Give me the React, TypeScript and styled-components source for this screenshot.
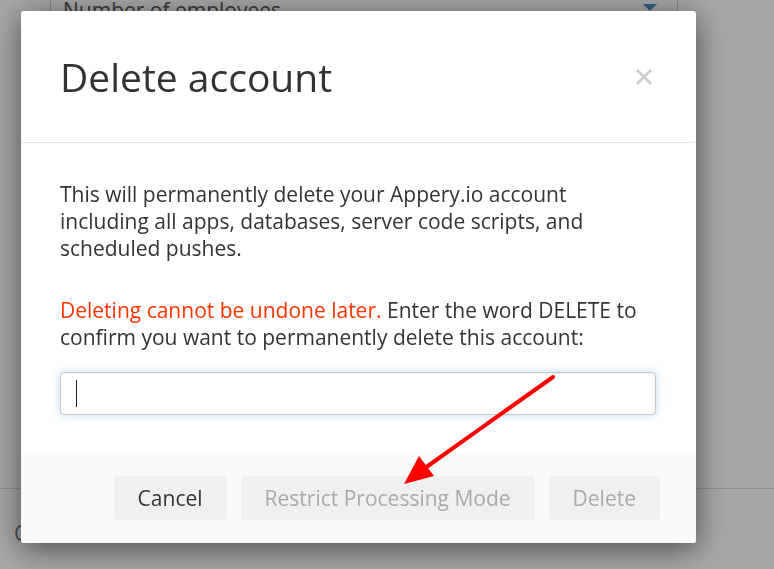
import { styled, createGlobalStyle } from "styled-components";

const GlobalStyle = createGlobalStyle`
	html, body {
		margin: 0;
		padding: 0;
		background: #fff;
		font-family: "Open Sans", "Liberation Sans", sans-serif;
		overflow: hidden;
	}
`;

const Page = styled.div`
	position: relative;
	width: 774px;
	height: 569px;
	background: #fff;
`;

const SelectField = styled.div`
	display: flex;
	align-items: flex-end;
	justify-content: space-between;
	margin-left: 50px;
	width: 594px;
	height: 12px;
	padding: 0 20px 0 12px;
	border: 1px solid #ccc;
	border-top: 0;
	font-size: 21px;
	line-height: 22px;
	color: #555;
	overflow: hidden;
`;

const SelectText = styled.span`
	margin-bottom: -9px;
`;

const Caret = styled.span`
	width: 0;
	height: 0;
	margin-bottom: 1px;
	border-left: 7px solid transparent;
	border-right: 7px solid transparent;
	border-top: 7px solid #4a8bd0;
`;

const Divider = styled.div`
	margin-top: 475px;
	height: 1px;
	background: #ddd;
`;

const FooterLetter = styled.div`
	margin: 30px 0 0 14px;
	font-size: 21px;
	color: #777;
`;

const Overlay = styled.div`
	position: fixed;
	inset: 0;
	background: rgba(0, 0, 0, 0.35);
`;

const Modal = styled.div`
	position: relative;
	margin: 11px 0 0 21px;
	width: 675px;
	height: 532px;
	display: flex;
	flex-direction: column;
	background: #fff;
	border-radius: 3px;
	box-shadow: 0 6px 30px rgba(0, 0, 0, 0.55);
	overflow: hidden;
`;

const Header = styled.div`
	display: flex;
	align-items: center;
	justify-content: space-between;
	padding: 40px 40px 39px 39px;
	border-bottom: 1px solid #e5e5e5;
	border-radius: 3px;
`;

const Title = styled.h2`
	margin: 0;
	font-size: 39px;
	font-weight: 400;
	line-height: 52px;
	color: #333;
`;

const Close = styled.button`
	border: 0;
	background: none;
	padding: 0;
	margin-right: 2px;
	color: #ccc;
	cursor: pointer;
	display: flex;
`;

const Body = styled.div`
	flex: 1;
	padding: 38px 40px 0 39px;
`;

const Text = styled.p<{ $narrow?: boolean }>`
	margin: 0 0 35px 0;
	max-width: ${(p) => (p.$narrow ? "545px" : "none")};
	font-size: 21px;
	line-height: 27px;
	color: #333;
`;

const Warn = styled.span`
	color: #ff3300;
`;

const Input = styled.div`
	display: flex;
	align-items: center;
	margin-top: -14px;
	height: 41px;
	padding-left: 15px;
	border: 1px solid #c9c9c9;
	border-radius: 4px;
	background: #fff;
	box-shadow: inset 0 1px 2px rgba(0, 0, 0, 0.08), 0 0 8px rgba(102, 175, 233, 0.45);
`;

const Cursor = styled.span`
	width: 1px;
	height: 27px;
	background: #222;
`;

const Footer = styled.div`
	display: flex;
	justify-content: flex-end;
	gap: 14px;
	padding: 23px 36px 23px 0;
	background: #fafafa;
`;

const Button = styled.button<{ $disabled?: boolean }>`
	height: 44px;
	padding: 0 24px;
	border: 0;
	border-radius: 4px;
	background: #f0f0f0;
	font-family: "Open Sans", "Liberation Sans", sans-serif;
	font-size: 21px;
	color: ${(p) => (p.$disabled ? "#aaa" : "#333")};
	cursor: ${(p) => (p.$disabled ? "default" : "pointer")};
`;

const Arrow = styled.svg`
	position: absolute;
	left: 0;
	top: 0;
	pointer-events: none;
`;

function App() {
	return (
		<>
			<GlobalStyle />
			<Page>
				<SelectField>
					<SelectText>Number of employees</SelectText>
					<Caret />
				</SelectField>
				<Divider />
				<FooterLetter>C</FooterLetter>
			</Page>
			<Overlay>
				<Modal>
					<Header>
						<Title>Delete account</Title>
						<Close>
							<svg width="20" height="20" viewBox="0 0 20 20">
								<path d="M3 3L17 17M17 3L3 17" stroke="currentColor" strokeWidth="2.6" />
							</svg>
						</Close>
					</Header>
					<Body>
						<Text $narrow>
							This will permanently delete your Appery.io account including all apps, databases, server
							code scripts, and scheduled pushes.
						</Text>
						<Text>
							<Warn>Deleting cannot be undone later.</Warn> Enter the word DELETE to confirm you want to
							permanently delete this account:
						</Text>
						<Input>
							<Cursor />
						</Input>
					</Body>
					<Footer>
						<Button>Cancel</Button>
						<Button $disabled>Restrict Processing Mode</Button>
						<Button $disabled>Delete</Button>
					</Footer>
				</Modal>
				<Arrow width="774" height="569" viewBox="0 0 774 569">
					<path d="M553 377L425 468" stroke="#ff0000" strokeWidth="4" strokeLinecap="round" />
					<path d="M404 484L419 456L434 476Z" fill="#ff0000" />
				</Arrow>
			</Overlay>
		</>
	);
}

export default App;
